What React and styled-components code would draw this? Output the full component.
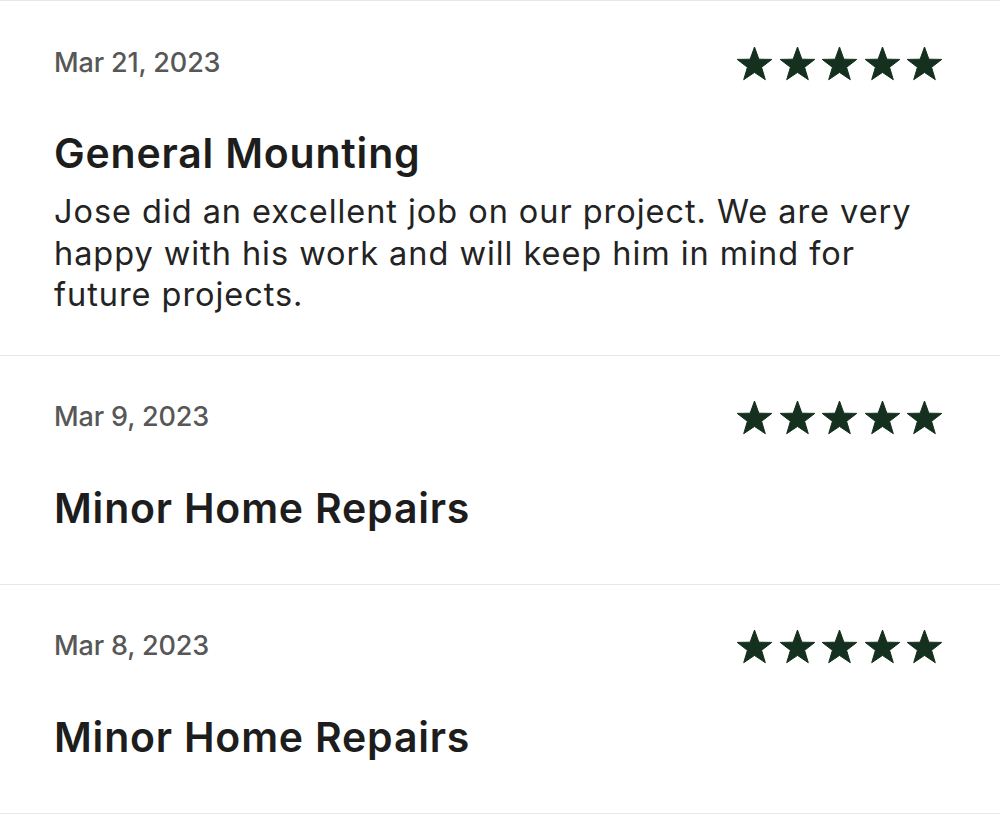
import React from "react";
import styled, { createGlobalStyle } from "styled-components";

const GlobalStyle = createGlobalStyle`
  html, body {
    margin: 0;
    padding: 0;
    background: #ffffff;
  }
  body {
    font-family: "Inter", "Noto Sans", sans-serif;
    -webkit-font-smoothing: antialiased;
  }
`;

const List = styled.div`
  display: flex;
  flex-direction: column;
  width: 1000px;
  border-top: 1px solid #e8e8e8;
`;

const Card = styled.div`
  display: flex;
  flex-direction: column;
  padding: 41px 57px 39px 54px;
  border-bottom: 1px solid #e8e8e8;
`;

const Header = styled.div`
  display: flex;
  align-items: center;
  justify-content: space-between;
  height: 40px;
`;

const DateText = styled.span`
  font-size: 27px;
  font-weight: 500;
  color: #575757;
  letter-spacing: -0.15px;
`;

const Stars = styled.div`
  display: flex;
  gap: 5.5px;
  margin-top: 2px;
`;

const Title = styled.h2`
  margin: 46px 0 12px;
  font-size: 41px;
  line-height: 50px;
  font-weight: 600;
  color: #1d1d1d;
  letter-spacing: 0.8px;
`;

const Body = styled.p`
  margin: 1px 0 0;
  font-size: 32.5px;
  line-height: 41.5px;
  font-weight: 400;
  color: #232323;
  letter-spacing: 0.95px;
`;

const Star = () => (
  <svg width="37" height="35" viewBox="0 0 37 35">
    <path
      d="M18.5 1 L22.9 13.2 L35.8 13.4 L25.6 21.3 L29.3 33.7 L18.5 26.4 L7.7 33.7 L11.4 21.3 L1.2 13.4 L14.1 13.2 Z"
      fill="#15301e"
      stroke="#15301e"
      strokeWidth="1"
      strokeLinejoin="round"
    />
  </svg>
);

const reviews = [
  {
    date: "Mar 21, 2023",
    title: "General Mounting",
    text: "Jose did an excellent job on our project. We are very happy with his work and will keep him in mind for future projects.",
  },
  { date: "Mar 9, 2023", title: "Minor Home Repairs" },
  { date: "Mar 8, 2023", title: "Minor Home Repairs" },
];

export default function App() {
  return (
    <>
      <GlobalStyle />
      <List>
        {reviews.map((r, i) => (
          <Card key={i}>
            <Header>
              <DateText>{r.date}</DateText>
              <Stars>
                {[0, 1, 2, 3, 4].map((s) => (
                  <Star key={s} />
                ))}
              </Stars>
            </Header>
            <Title>{r.title}</Title>
            {r.text && <Body>{r.text}</Body>}
          </Card>
        ))}
      </List>
    </>
  );
}
